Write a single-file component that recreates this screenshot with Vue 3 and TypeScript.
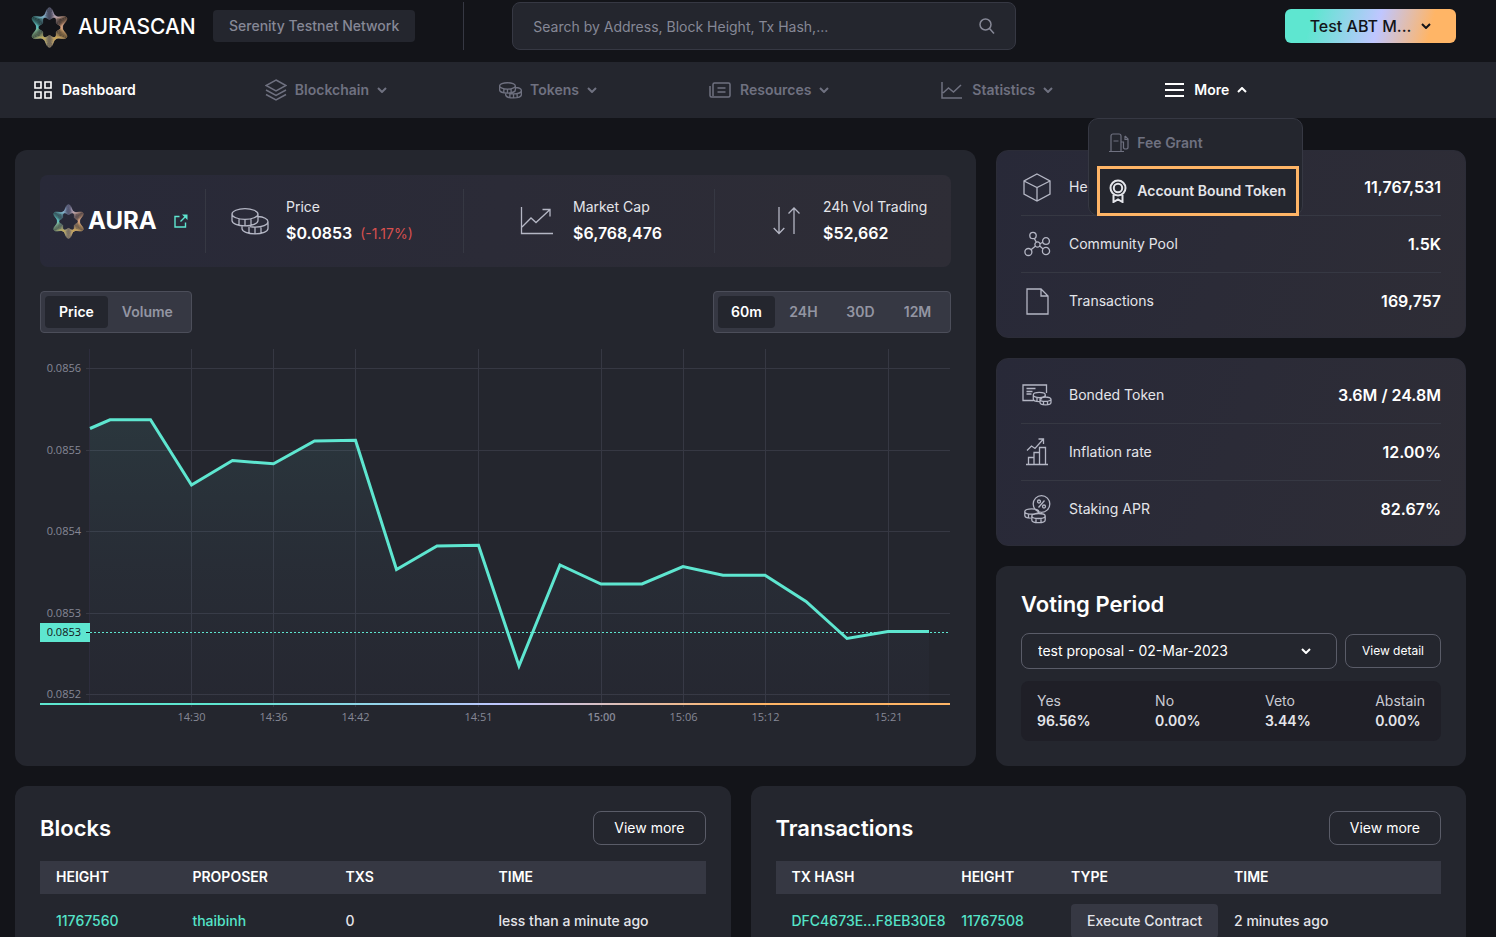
<script setup lang="ts">
import { ref } from 'vue'

interface Icon {
  w: number
  h: number
  d: string
}

const ellipse = (cx: number, cy: number, rx: number, ry: number = rx): string =>
  `M${cx - rx} ${cy}a${rx} ${ry} 0 1 0 ${rx * 2} 0a${rx} ${ry} 0 1 0 ${-rx * 2} 0z`

const coins =
  ellipse(14, 6, 13, 5.3) +
  'M1 6v6.5c0 3 5.8 5.3 13 5.3s13-2.3 13-5.3V6M8 11v5.7M14 11.5v6M20 10.8v5.8' +
  'M27 8.5c5.8.4 10 2.6 10 5.3c0 3-5.8 5.3-13 5.3c-2 0-3.500-.2-5-.5' +
  'M37 14v6.500c0 3-5.8 5.3-13 5.3s-13-2.300-13-5.3v-2.800M18 19v5.700M24 19.500v6M30 18.700v5.800'

const icons: Record<string, Icon> = {
  grid: { w: 18, h: 18, d: 'M1 1h6v6H1zM11 1h6v6h-6zM1 11h6v6H1zM11 11h6v6h-6z' },
  layers: { w: 22, h: 22, d: 'M11 1L21 6.500L11 12L1 6.500zM1 11l10 5.500L21 11M1 15.500L11 21l10-5.500' },
  coins: { w: 38, h: 27, d: coins },
  news: {
    w: 22,
    h: 16,
    d: 'M4 14V2.5C4 1.700 4.700 1 5.500 1h14c.8 0 1.500.7 1.500 1.500v11c0 .8-.7 1.500-1.500 1.500h-17C1.700 15 1 14.300 1 13.500V4M8.500 6h8M8.500 10h8'
  },
  trend: { w: 22, h: 18, d: 'M1 1v16h20M2 12l5.500-5l5 4l7.500-7' },
  menu: { w: 20, h: 16, d: 'M0 2h19M0 8h19M0 14h19' },
  pump: {
    w: 22,
    h: 20,
    d: 'M3 18V3C3 1.800 3.800 1 5 1h6c1.200 0 2 .8 2 2v15M1 18.500h15M5.500 8h5M13 9h2.500v5.500c0 2 4.500 2 4.500 0V6L17 3M17 3v3.500h3'
  },
  award: {
    w: 18,
    h: 24,
    d: ellipse(9, 9, 7.5) + ellipse(9, 9, 4.2) + 'M4.500 16v7l4.500-2.500l4.500 2.500v-7'
  },
  cube: { w: 28, h: 29, d: 'M14 1L27 8v13L14 28L1 21V8zM1 8l13 6.500L27 8M14 14.500V28' },
  pool: {
    w: 27,
    h: 26,
    d:
      ellipse(9, 4.5, 3.2) + ellipse(22, 10, 3.4) + ellipse(4.4, 21, 3.5) + ellipse(22, 20, 3.6) +
      ellipse(13.5, 13.5, 2.6) + 'M10.300 7.500l2 3.600M16 12.700l2.800-1.500M11.300 15.200l-4.300 3.500M15.800 15l3 2.700'
  },
  file: { w: 23, h: 27, d: 'M1 1h14l7 7v18H1zM15 1v7h7' },
  bonded: {
    w: 30,
    h: 22,
    d:
      'M11.500 16.500H1V1h23.500v8M4.500 4.500h9M4.500 7.500h6M4.500 10h5' + ellipse(17.3, 11, 6, 2.6) +
      'M11.300 11v4c0 1.500 2.700 2.600 6 2.600M15 13.500v3.700M19.500 13.500v2M23.300 11v2' + ellipse(23.5, 15.2, 5.5, 2.2) +
      'M18 15.200v3.300c0 1.300 2.500 2.300 5.500 2.300s5.500-1 5.500-2.300v-3.300M21.500 17.300v3.300M25.500 17.300v3.300'
  },
  growth: {
    w: 22,
    h: 28,
    d: 'M0 26.500h22M2.500 26.500v-7h5.500M8 26.500v-12h5.500M13.500 26.500V9.500h6v17M1 12.500L5.500 8l3.500 2.500L17 1.500M12.500 1h5v5'
  },
  staking: {
    w: 27,
    h: 29,
    d:
      ellipse(17.5, 9, 8.3) + ellipse(15, 6.5, 1.5) + ellipse(20, 11.5, 1.5) + 'M20.500 5.500L14.500 12.500' +
      ellipse(7.8, 16.5, 7, 2.7) + 'M.8 16.500v4c0 1.500 2.600 2.600 6 2.700M14.800 16.500v2M4.500 19v3.600M10 19v1' +
      ellipse(14.5, 21, 6.7, 2.5) + 'M7.800 21v4c0 1.600 3 2.700 6.700 2.700s6.700-1.100 6.700-2.700v-4M12 23.500v4M17 23.500v4'
  },
  market: { w: 33, h: 28, d: 'M1.500 0v26.500H33M2 20l9-9l5 4.500L29.500 3M22.500 2.500H30v7' },
  arrows: { w: 28, h: 28, d: 'M6 0v26.500M.7 21L6 26.500L11.300 21M21 27V1M15.500 6.500L21 1l5.500 5.500' }
}

/* Logo: six-pointed curves that draw together between the tips and fan out at them. */
const curveCount = 12
const logoCurves: string[] = Array.from({ length: curveCount }, (_, k) => {
  const f = k / (curveCount - 1)
  const waist = 11 + 1.8 * f
  const tip = 8 + 11.2 * f
  const pts: string[] = []
  for (let i = 0; i < 180; i++) {
    const t = (i / 180) * Math.PI * 2
    const r = waist + (tip - waist) * Math.pow(0.5 + 0.5 * Math.cos(6 * t), 1 + 0.7 * f)
    pts.push(`${(20 + r * Math.sin(t)).toFixed(2)} ${(20 - r * Math.cos(t)).toFixed(2)}`)
  }
  return `M${pts.join('L')}Z`
})

const nav = [
  { label: 'Dashboard', icon: 'grid', kind: 'home' },
  { label: 'Blockchain', icon: 'layers', kind: 'sub' },
  { label: 'Tokens', icon: 'coins', kind: 'sub' },
  { label: 'Resources', icon: 'news', kind: 'sub' },
  { label: 'Statistics', icon: 'trend', kind: 'sub' },
  { label: 'More', icon: 'menu', kind: 'open' }
]

const market = [
  { key: 'price', icon: 'coins', label: 'Price', value: '$0.0853', change: '(-1.17%)' },
  { key: 'cap', icon: 'market', label: 'Market Cap', value: '$6,768,476', change: '' },
  { key: 'vol', icon: 'arrows', label: '24h Vol Trading', value: '$52,662', change: '' }
]

const statCards = [
  [
    { icon: 'cube', label: 'Height', value: '11,767,531' },
    { icon: 'pool', label: 'Community Pool', value: '1.5K' },
    { icon: 'file', label: 'Transactions', value: '169,757' }
  ],
  [
    { icon: 'bonded', label: 'Bonded Token', value: '3.6M / 24.8M' },
    { icon: 'growth', label: 'Inflation rate', value: '12.00%' },
    { icon: 'staking', label: 'Staking APR', value: '82.67%' }
  ]
]

const votes = [
  { label: 'Yes', value: '96.56%' },
  { label: 'No', value: '0.00%' },
  { label: 'Veto', value: '3.44%' },
  { label: 'Abstain', value: '0.00%' }
]

const series = ['Price', 'Volume']
const activeSeries = ref('Price')
const ranges = ['60m', '24H', '30D', '12M']
const activeRange = ref('60m')
const query = ref('')

const yTicks = [
  { y: 27.5, label: '0.0856' },
  { y: 109.5, label: '0.0855' },
  { y: 190.5, label: '0.0854' },
  { y: 272.5, label: '0.0853' },
  { y: 353.5, label: '0.0852' }
]
const xTicks = [
  { x: 151.5, label: '14:30' },
  { x: 233.5, label: '14:36' },
  { x: 315.5, label: '14:42' },
  { x: 438.5, label: '14:51' },
  { x: 561.5, label: '15:00', major: true },
  { x: 643.5, label: '15:06' },
  { x: 725.5, label: '15:12' },
  { x: 848.5, label: '15:21' }
]
const points: [number, number][] = [
  [50, 87.5], [70, 78.8], [110.5, 78.8], [151.5, 144], [192.5, 119.5], [233.5, 122.8],
  [274.5, 100], [315.5, 99.3], [356.5, 228.5], [397, 205], [438.5, 204.3], [479, 325],
  [520, 224], [561, 243], [602, 243], [643, 225.5], [683, 234.2], [725, 234.2],
  [766, 260.5], [807, 297.5], [848, 290.5], [889, 290.5]
]
const linePath = 'M' + points.map((p) => p.join(' ')).join('L')
const areaPath = `${linePath}L889 362L50 362Z`
</script>

<template>
  <div class="page">
    <svg class="defs" width="0" height="0" aria-hidden="true">
      <defs>
        <linearGradient id="logoSide" x1="0" y1="0" x2="1" y2="0">
          <stop offset="0" stop-color="#5fd6cc" />
          <stop offset="0.5" stop-color="#b4b9ee" />
          <stop offset="1" stop-color="#f0b080" />
        </linearGradient>
        <linearGradient id="logoFoot" x1="0" y1="0" x2="0" y2="1">
          <stop offset="0.5" stop-color="#c9a648" stop-opacity="0" />
          <stop offset="0.85" stop-color="#c9a648" />
        </linearGradient>
      </defs>
    </svg>

    <header class="top">
      <a class="brand" href="#">
        <svg class="star" viewBox="0 0 40 40" aria-hidden="true">
          <path v-for="(d, i) in logoCurves" :key="i" :d="d" stroke="url(#logoSide)" />
          <path v-for="(d, i) in logoCurves" :key="'f' + i" :d="d" stroke="url(#logoFoot)" />
        </svg>
        <span class="wordmark">AURASCAN</span>
      </a>
      <span class="network">Serenity Testnet Network</span>
      <span class="rule"></span>
      <form class="search" role="search" @submit.prevent>
        <input v-model="query" type="text" aria-label="Search" placeholder="Search by Address, Block Height, Tx Hash,..." />
        <button type="submit" aria-label="Submit search">
          <svg width="16" height="16" viewBox="0 0 16 16"><circle cx="6.500" cy="6.500" r="5.500" /><path d="M10.500 10.500L15 15.500" /></svg>
        </button>
      </form>
      <button class="account" type="button">
        Test ABT M...
        <svg class="chev" viewBox="0 0 10 6"><path d="M1 1l4 4l4-4" /></svg>
      </button>
    </header>

    <nav class="nav">
      <ul>
        <li v-for="item in nav" :key="item.label" :class="item.kind">
          <a href="#">
            <svg :class="['ico', item.icon]" :viewBox="`0 0 ${icons[item.icon].w} ${icons[item.icon].h}`">
              <path :d="icons[item.icon].d" />
            </svg>
            <span>{{ item.label }}</span>
            <svg v-if="item.kind !== 'home'" class="chev" viewBox="0 0 10 6">
              <path :d="item.kind === 'open' ? 'M1 5l4-4l4 4' : 'M1 1l4 4l4-4'" />
            </svg>
          </a>
          <ul v-if="item.kind === 'open'" class="menu-list">
            <li>
              <a href="#">
                <svg width="22" height="20" viewBox="0 0 22 20"><path :d="icons.pump.d" /></svg>Fee Grant
              </a>
            </li>
            <li class="marked">
              <a href="#">
                <svg width="22" height="24" viewBox="-1 0 22 24"><path :d="icons.award.d" /></svg>Account Bound Token
              </a>
            </li>
          </ul>
        </li>
      </ul>
    </nav>

    <main>
      <div class="overview">
        <section class="card chart-card">
          <div class="token-bar">
            <div class="token">
              <svg class="star small" viewBox="0 0 40 40" aria-hidden="true">
                <path v-for="(d, i) in logoCurves" :key="i" :d="d" stroke="url(#logoSide)" />
                <path v-for="(d, i) in logoCurves" :key="'f' + i" :d="d" stroke="url(#logoFoot)" />
              </svg>
              <strong>AURA</strong>
              <a href="#" aria-label="Open AURA">
                <svg width="14" height="14" viewBox="0 0 14 14">
                  <path d="M5.500 2.500H1v10.500h10.500V8.500M6.500 7.500L11 3" />
                  <path class="head" d="M8 .5h5.500V6z" />
                </svg>
              </a>
            </div>
            <div v-for="m in market" :key="m.key" :class="['metric', m.key]">
              <svg :width="icons[m.icon].w" :height="icons[m.icon].h" :viewBox="`0 0 ${icons[m.icon].w} ${icons[m.icon].h}`">
                <path :d="icons[m.icon].d" />
              </svg>
              <div class="figures">
                <p>{{ m.label }}</p>
                <p class="amount"><b>{{ m.value }}</b><span v-if="m.change">{{ m.change }}</span></p>
              </div>
            </div>
          </div>

          <div class="controls">
            <div class="tabs">
              <button v-for="s in series" :key="s" type="button" :class="{ on: s === activeSeries }" @click="activeSeries = s">{{ s }}</button>
            </div>
            <div class="tabs even">
              <button v-for="r in ranges" :key="r" type="button" :class="{ on: r === activeRange }" @click="activeRange = r">{{ r }}</button>
            </div>
          </div>

          <svg class="chart" viewBox="0 0 911 400" role="img" aria-label="AURA price, last 60 minutes">
            <defs>
              <linearGradient id="axis" x1="0" y1="0" x2="1" y2="0">
                <stop offset="0.2" stop-color="#5ee6d0" />
                <stop offset="0.51" stop-color="#bfc6ff" />
                <stop offset="0.78" stop-color="#ffb566" />
              </linearGradient>
              <linearGradient id="area" x1="0" y1="0" x2="0" y2="1">
                <stop offset="0" stop-color="#6ee0d8" stop-opacity="0.09" />
                <stop offset="1" stop-color="#5a5a90" stop-opacity="0.03" />
              </linearGradient>
            </defs>
            <path class="side" d="M49.500 8V362" />
            <path v-for="t in yTicks" :key="t.label + t.y" class="line" :d="`M46 ${t.y}H910`" />
            <path v-for="t in xTicks" :key="t.label" class="line" :d="`M${t.x} 8V366`" />
            <path class="area" :d="areaPath" />
            <path class="last" d="M50 291.500H908" />
            <path class="trace" :d="linePath" />
            <rect x="0" y="362" width="910" height="2" fill="url(#axis)" />
            <text v-for="t in yTicks" :key="'y' + t.y" x="41" :y="t.y + 3.5" text-anchor="end">{{ t.label }}</text>
            <text v-for="t in xTicks" :key="'x' + t.x" :class="{ major: t.major }" :x="t.x" y="380" text-anchor="middle">{{ t.label }}</text>
            <rect x="0" y="282" width="50" height="19" fill="#5ee6d0" />
            <path d="M46 291.500h4" stroke="#131419" />
            <text class="tag" x="41" y="295" text-anchor="end">0.0853</text>
          </svg>
        </section>

        <div class="side-col">
          <section v-for="(rows, i) in statCards" :key="i" class="card stats">
            <div v-for="row in rows" :key="row.label" class="stat">
              <span class="slot">
                <svg :width="icons[row.icon].w" :height="icons[row.icon].h" :viewBox="`0 0 ${icons[row.icon].w} ${icons[row.icon].h}`">
                  <path :d="icons[row.icon].d" />
                </svg>
              </span>
              <span class="name">{{ row.label }}</span>
              <b>{{ row.value }}</b>
            </div>
          </section>

          <section class="card voting">
            <h2>Voting Period</h2>
            <div class="picker">
              <div class="select">
                <select aria-label="Proposal">
                  <option>test proposal - 02-Mar-2023</option>
                </select>
                <svg class="chev" viewBox="0 0 10 6"><path d="M1 1l4 4l4-4" /></svg>
              </div>
              <button type="button" class="ghost tiny">View detail</button>
            </div>
            <dl>
              <div v-for="v in votes" :key="v.label">
                <dt>{{ v.label }}</dt>
                <dd>{{ v.value }}</dd>
              </div>
            </dl>
          </section>
        </div>
      </div>

      <div class="lists">
        <section class="card">
          <div class="list-head">
            <h2>Blocks</h2>
            <button type="button" class="ghost">View more</button>
          </div>
          <table class="blocks">
            <thead>
              <tr><th>HEIGHT</th><th>PROPOSER</th><th>TXS</th><th>TIME</th></tr>
            </thead>
            <tbody>
              <tr>
                <td><a href="#">11767560</a></td>
                <td><a href="#">thaibinh</a></td>
                <td>0</td>
                <td>less than a minute ago</td>
              </tr>
            </tbody>
          </table>
        </section>
        <section class="card">
          <div class="list-head">
            <h2>Transactions</h2>
            <button type="button" class="ghost">View more</button>
          </div>
          <table class="txs">
            <thead>
              <tr><th>TX HASH</th><th>HEIGHT</th><th>TYPE</th><th>TIME</th></tr>
            </thead>
            <tbody>
              <tr>
                <td><a href="#">DFC4673E...F8EB30E8</a></td>
                <td><a href="#">11767508</a></td>
                <td><span class="type">Execute Contract</span></td>
                <td>2 minutes ago</td>
              </tr>
            </tbody>
          </table>
        </section>
      </div>
    </main>
  </div>
</template>

<style>
html {
  background: #fff;
}
body {
  margin: 0;
  overflow: hidden;
}
</style>

<style scoped>
.page {
  height: calc(100vh - 1px);
  margin-right: 2px;
  overflow: hidden;
  background: #131419;
  color: #fff;
  font: 400 14px/20px Inter, "Liberation Sans", sans-serif;
}
.page *,
.page *::before,
.page *::after {
  box-sizing: border-box;
}
svg {
  display: block;
  flex: none;
  fill: none;
  stroke: currentColor;
}
.defs {
  position: absolute;
}
button,
input,
select {
  font: inherit;
  color: inherit;
  background: none;
  border: 0;
  margin: 0;
  padding: 0;
}
button {
  cursor: pointer;
}
a {
  color: inherit;
  text-decoration: none;
}
ul,
p,
h2,
dl,
dd {
  margin: 0;
  padding: 0;
  list-style: none;
}
h2 {
  font-size: 22px;
  line-height: 26px;
  font-weight: 600;
}
b {
  font-weight: 600;
}
.chev {
  width: 10px;
  height: 6px;
  stroke-width: 2;
}

.top {
  display: flex;
  align-items: flex-start;
  height: 62px;
  padding: 2px 40px 0 29px;
}
.brand {
  display: flex;
  align-items: center;
  width: 184px;
  height: 50px;
  gap: 8px;
}
.star {
  width: 41px;
  height: 41px;
  stroke-width: 0.4;
}
.star.small {
  width: 35px;
  height: 35px;
}
.wordmark {
  font-size: 21px;
  font-weight: 500;
}
.network {
  margin-top: 8px;
  padding: 0 16px;
  border-radius: 4px;
  background: #24262e;
  color: #868896;
  line-height: 32px;
  white-space: nowrap;
  font-weight: 500;
}
.rule {
  width: 1px;
  height: 48px;
  margin: 0 48px;
  background: #363843;
}
.search {
  display: flex;
  align-items: center;
  width: 504px;
  height: 48px;
  padding: 0 20px;
  border: 1px solid #363843;
  border-radius: 8px;
  background: #24262e;
  color: #868896;
}
.search input {
  flex: 1;
  padding-top: 2px;
  outline: 0;
}
.search input::placeholder {
  color: #868896;
  opacity: 1;
}
.search svg {
  stroke-width: 1.5;
}
.account {
  display: flex;
  align-items: center;
  justify-content: center;
  gap: 10px;
  width: 171px;
  height: 34px;
  margin: 7px 0 0 auto;
  border-radius: 6px;
  background: linear-gradient(105deg, #5ee6d0 16%, #bfc6ff 54%, #ffb566 84%);
  color: #131419;
  font-size: 16px;
  font-weight: 500;
}

.nav {
  background: #24262e;
  color: #6f7180;
  font-weight: 600;
}
.nav > ul {
  display: flex;
  gap: 112px;
  padding-left: 34px;
}
.nav > ul > li {
  position: relative;
}
.nav > ul > li > a {
  display: flex;
  align-items: center;
  height: 56px;
}
.nav .home {
  padding-right: 17px;
}
.nav .home,
.nav .open {
  color: #fff;
}
.nav .ico {
  width: 22px;
  height: 22px;
  margin-right: 8px;
  stroke-width: 1.5;
}
.nav .ico.grid {
  width: 18px;
  height: 18px;
  margin-right: 10px;
  stroke-width: 1.6;
}
.nav .ico.coins {
  width: 23px;
  height: 17px;
  stroke-width: 2.2;
}
.nav .ico.news {
  margin-right: 9px;
}
.nav .ico.trend {
  height: 18px;
  margin-right: 9px;
}
.nav .ico.menu {
  width: 20px;
  height: 16px;
  margin-right: 9px;
  stroke-width: 1.8;
}
.nav .chev {
  margin-left: 8px;
}
.menu-list {
  position: absolute;
  z-index: 2;
  top: 56px;
  left: -77px;
  width: 215px;
  border: 1px solid #363843;
  border-radius: 10px;
  background: #24262e;
  color: #6f7180;
}
.menu-list li {
  position: relative;
}
.menu-list a {
  display: flex;
  align-items: center;
  gap: 7px;
  height: 48px;
  padding-left: 19px;
  white-space: nowrap;
}
.menu-list svg {
  stroke-width: 1.2;
}
.menu-list .marked {
  color: #e4e5ea;
}
.menu-list .marked svg {
  stroke-width: 2;
}
.menu-list .marked::after {
  content: "";
  position: absolute;
  inset: -1px 3px -1px 8px;
  border: 3px solid #ffb566;
}

main {
  padding: 32px 30px 0 15px;
}
.card {
  padding: 25px;
  border-radius: 12px;
  background: #24262e;
}
.overview {
  display: grid;
  grid-template-columns: 1fr 470px;
  gap: 20px;
}
.token-bar {
  display: grid;
  grid-template-columns: 165fr 258fr 251fr 237fr;
  align-items: center;
  height: 92px;
  border-radius: 8px;
  background: linear-gradient(100deg, #282938, #2e2d36);
}
.token {
  display: flex;
  align-items: center;
  height: 64px;
  padding-left: 11px;
}
.token strong {
  margin: 0 17px 0 2px;
  font-size: 24px;
  font-weight: 700;
}
.token a {
  color: #5ee6d0;
}
.token a svg {
  stroke-width: 1.4;
}
.token .head {
  fill: currentColor;
  stroke: none;
}
.metric {
  display: flex;
  align-items: center;
  height: 64px;
  gap: 17px;
  color: #e4e5ea;
  border-left: 1px solid #363843;
}
.metric svg {
  color: #b4b6c4;
  stroke-width: 1.3;
}
.metric.price {
  padding-left: 25px;
}
.metric.cap {
  gap: 20px;
  padding-left: 56px;
}
.metric.vol {
  gap: 22px;
  padding-left: 58px;
}
.metric p {
  white-space: nowrap;
}
.figures {
  padding-bottom: 2px;
}
.metric .amount {
  margin-top: 6px;
}
.amount b {
  font-size: 16px;
  color: #fff;
}
.amount span {
  margin-left: 8px;
  color: #d8504f;
}
.controls {
  display: flex;
  justify-content: space-between;
  margin: 24px 0 8px;
}
.tabs {
  display: flex;
  padding: 4px;
  border: 1px solid #4c4e5a;
  border-radius: 4px;
  background: #363843;
}
.tabs button {
  height: 32px;
  padding: 0 14px;
  border-radius: 4px;
  color: #9395a2;
  font-weight: 600;
}
.tabs.even button {
  width: 57px;
  padding: 0;
}
.tabs .on {
  background: #24262e;
  color: #fff;
}
.chart {
  width: 100%;
  height: auto;
}
.chart .line {
  stroke: #363843;
}
.chart .side {
  stroke: #2d2d3d;
}
.chart .area {
  fill: url(#area);
  stroke: none;
}
.chart .trace {
  stroke: #5ee6d0;
  stroke-width: 3;
}
.chart .last {
  stroke: #5ee6d0;
  stroke-dasharray: 2 2;
}
.chart rect {
  stroke: none;
}
.chart text {
  fill: #868896;
  stroke: none;
  font: 400 11px "Open Sans", "Noto Sans", sans-serif;
}
.chart .major {
  font-weight: 600;
}
.chart .tag {
  fill: #131419;
}

.side-col {
  display: flex;
  flex-direction: column;
  gap: 20px;
}
.stats {
  padding: 8px 24px;
  border: 1px solid #2b2c37;
  background: linear-gradient(110deg, #282938, #2e2d36);
}
.stat {
  display: flex;
  align-items: center;
  height: 57px;
  border-bottom: 1px solid #363843;
}
.stat:last-child {
  height: 56px;
  border-bottom: 0;
}
.slot {
  display: flex;
  justify-content: center;
  width: 32px;
  margin-right: 16px;
  color: #b4b6c4;
}
.slot svg {
  stroke-width: 1.3;
}
.name {
  flex: 1;
  color: #e4e5ea;
}
.stat b {
  font-size: 16px;
}
.picker {
  display: flex;
  align-items: center;
  gap: 8px;
  margin: 16px 0 12px;
}
.select {
  position: relative;
  flex: 1;
}
.select select {
  display: block;
  width: 100%;
  height: 36px;
  padding: 0 16px;
  border: 1px solid #5a5c68;
  border-radius: 8px;
  appearance: none;
}
.select .chev {
  position: absolute;
  right: 26px;
  top: 15px;
}
.ghost {
  height: 34px;
  padding: 0 20px;
  border: 1px solid #5a5c68;
  border-radius: 8px;
}
.ghost.tiny {
  padding: 0 16px;
  font-size: 12px;
}
dl {
  display: flex;
  justify-content: space-between;
  padding: 10px 16px;
  border-radius: 8px;
  background: #1f1f27;
}
dt {
  color: #c9cad2;
}
dd {
  color: #e4e5ea;
  font-weight: 600;
}

.lists {
  display: grid;
  grid-template-columns: 1fr 1fr;
  gap: 20px;
  margin-top: 20px;
}
.list-head {
  display: flex;
  align-items: center;
  justify-content: space-between;
  margin-bottom: 16px;
}
table {
  width: 100%;
  table-layout: fixed;
  border-collapse: collapse;
}
th,
td {
  padding: 0 0 0 16px;
  text-align: left;
  white-space: nowrap;
}
th {
  height: 33px;
  padding-bottom: 2px;
  background: #363843;
  font-weight: 600;
}
td {
  height: 54px;
  color: #e4e5ea;
  font-weight: 500;
}
td a {
  color: #55e3c8;
}
.blocks th:nth-child(1) {
  width: 20.5%;
}
.blocks th:nth-child(2),
.blocks th:nth-child(3) {
  width: 23%;
}
.txs th:nth-child(1) {
  width: 25.5%;
}
.txs th:nth-child(2) {
  width: 16.5%;
}
.txs th:nth-child(3) {
  width: 24.5%;
}
.type {
  display: inline-block;
  padding: 0 16px;
  border-radius: 4px;
  background: #363843;
  line-height: 34px;
}
</style>
